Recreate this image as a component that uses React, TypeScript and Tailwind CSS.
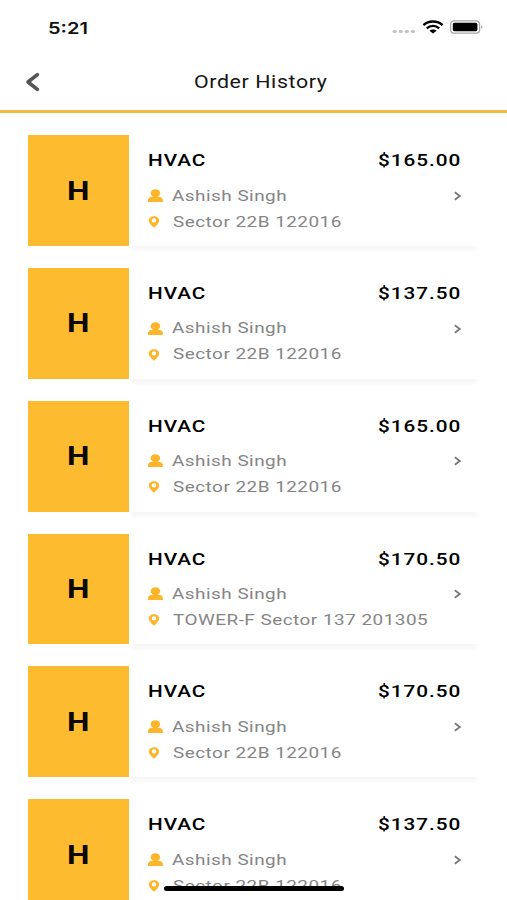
const orders = [
  { price: '$165.00', address: 'Sector 22B 122016' },
  { price: '$137.50', address: 'Sector 22B 122016' },
  { price: '$165.00', address: 'Sector 22B 122016' },
  { price: '$170.50', address: 'TOWER-F Sector 137 201305' },
  { price: '$170.50', address: 'Sector 22B 122016' },
  { price: '$137.50', address: 'Sector 22B 122016' },
];

function StatusBar() {
  return (
    <div className="flex h-[54px] shrink-0 items-center justify-between pl-[48px] pr-[23px]">
      <span className="origin-left scale-x-[1.25] pt-px font-[Inter,sans-serif] text-[16px] font-semibold leading-5 text-[#111]">
        5:21
      </span>
      <div className="flex items-center">
        <svg width="24" height="5" viewBox="0 0 24 5" className="mt-[9px]" fill="#c4c4c4">
          <ellipse cx="2.6" cy="2.5" rx="2.1" ry="1.7" />
          <ellipse cx="8.8" cy="2.5" rx="2.1" ry="1.7" />
          <ellipse cx="14.8" cy="2.5" rx="2.1" ry="1.7" />
          <ellipse cx="21" cy="2.5" rx="2.1" ry="1.7" />
        </svg>
        <svg width="22" height="14" viewBox="0 0 22 14" className="ml-[6px]" fill="none" stroke="#000" strokeWidth="2.3">
          <path d="M1.4 5.1C6.5.3 15.5.3 20.6 5.1" />
          <path d="M4.8 8.4C8.2 5.1 13.8 5.1 17.2 8.4" />
          <path d="M7.4 10.8C9.3 9 12.7 9 14.6 10.8L11 13.6Z" fill="#000" stroke="none" />
        </svg>
        <svg width="34" height="14" viewBox="0 0 34 14" className="ml-[6px]">
          <rect x="0.6" y="0.8" width="29" height="12.4" rx="3.4" fill="#fff" stroke="#aaa" strokeWidth="1.3" />
          <rect x="2.8" y="2.8" width="24.6" height="8.4" rx="1.6" fill="#000" />
          <path d="M31.2 5.2C32.9 5.8 32.9 8.2 31.2 8.8Z" fill="#999" />
        </svg>
      </div>
    </div>
  );
}

function OrderCard({ price, address }: { price: string; address: string }) {
  return (
    <article className="flex h-[110.7px] w-[451.5px] shrink-0">
      <div className="flex w-[101px] shrink-0 items-center justify-center bg-[#fdbb2f]">
        <span className="scale-x-[1.22] text-[26px] font-bold leading-none text-[#0c0903]">H</span>
      </div>
      <div className="flex min-w-0 flex-1 flex-col bg-white pl-[19.5px] pr-[18px] pt-[13.7px] shadow-[0_7px_3px_-2px_rgba(0,0,0,0.03)]">
        <div className="flex h-6 items-center justify-between">
          <span className="origin-left scale-x-[1.22] text-[17px] font-medium tracking-[0.8px] text-black">HVAC</span>
          <span className="origin-right scale-x-[1.22] text-[17px] font-medium tracking-[0.8px] text-black">{price}</span>
        </div>
        <div className="mt-[9.8px] flex h-[26px] items-center">
          <svg width="15" height="14" viewBox="0 0 15 14" fill="#fdb52b">
            <ellipse cx="7.4" cy="4.2" rx="4.7" ry="4" />
            <path d="M4.8 6H10V9H4.8Z" />
            <path d="M0 13V11.4C0 9.5 1.3 8.5 3.5 7.8C5.9 8.9 9 8.9 11.4 7.8C13.6 8.5 14.9 9.5 14.9 11.4V13Z" />
          </svg>
          <span className="ml-[8.5px] origin-left scale-x-[1.22] whitespace-nowrap pt-px text-[15.5px] tracking-[0.4px] text-[#858585]">
            Ashish Singh
          </span>
          <svg width="8" height="10" viewBox="0 0 8 10" className="ml-auto" fill="none" stroke="#777" strokeWidth="1.7">
            <path d="M1.8 1.2L6.8 5L1.8 8.8" />
          </svg>
        </div>
        <div className="flex h-[26px] items-center">
          <svg width="12" height="12" viewBox="0 0 12 12" fill="#fdb52b">
            <path fillRule="evenodd" d="M6 .2C3 .2.8 2 .8 4.4C.8 7.5 4.8 10.4 6 11.8C7.2 10.4 11.2 7.5 11.2 4.4C11.2 2 9 .2 6 .2ZM6 2.3A2.3 2.1 0 1 1 6 6.5A2.3 2.1 0 1 1 6 2.3Z" />
          </svg>
          <span className="ml-[12.5px] origin-left scale-x-[1.22] whitespace-nowrap pt-px text-[15.5px] tracking-[0.4px] text-[#858585]">
            {address}
          </span>
        </div>
      </div>
    </article>
  );
}

export default function App() {
  return (
    <div className="relative flex h-[900px] w-[507px] flex-col overflow-hidden bg-white font-[Roboto,sans-serif]">
      <StatusBar />
      <header className="grid h-[59px] shrink-0 grid-cols-[1fr_auto_1fr] items-center border-b-[3px] border-[#f4b942] pl-[25px] pr-[11px]">
        <svg width="16" height="20" viewBox="0 0 16 20" fill="none" stroke="#555" strokeWidth="3.6" strokeLinecap="round" strokeLinejoin="round">
          <path d="M12.4 2.6L3 10L12.4 17.4" />
        </svg>
        <h1 className="origin-center scale-x-[1.22] whitespace-nowrap pt-px text-[17.5px] font-normal tracking-[0.5px] text-[#151515]">
          Order History
        </h1>
      </header>
      <main className="flex flex-col gap-[22.1px] pl-[27.5px] pt-[22.3px]">
        {orders.map((order, index) => (
          <OrderCard key={index} {...order} />
        ))}
      </main>
      <div className="absolute bottom-[9px] left-[164px] h-[5px] w-[180px] rounded-full bg-black" />
    </div>
  );
}
